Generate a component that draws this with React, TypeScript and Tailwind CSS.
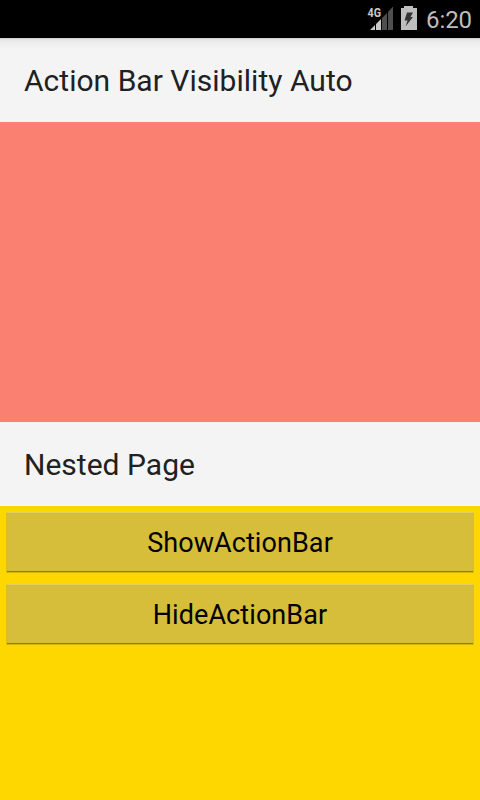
function SignalIcon() {
  return (
    <svg width="26" height="38" viewBox="368 0 26 38" className="shrink-0 overflow-visible">
      <path d="M370 30L375 25V30Z M376 24L381 19V30H376Z" fill="#cacaca" />
      <path d="M382 18L387 13V30H382Z M388 12L393 6.500V30H388Z" fill="#4f4f4f" />
      <text x="367.500" y="17" fontSize="13.500" fontWeight="700" textLength="13.500" lengthAdjust="spacingAndGlyphs" fill="#cacaca">4G</text>
    </svg>
  );
}

function BatteryIcon() {
  return (
    <svg width="16" height="38" viewBox="401 0 16 38" className="shrink-0">
      <path d="M404 6H413V8H417V30H401V8H404Z" fill="#bebebe" />
      <path d="M407 12.500H413L410.500 17H413L405.500 26.500L407.500 20.500H404.500Z" fill="#333" />
    </svg>
  );
}

function PageTitle({ children }: { children: string }) {
  return <h1 className="flex h-[84px] shrink-0 items-center px-6 text-[30px] text-[#212121]"><span className="tracking-[0.02px]">{children}</span></h1>;
}

function ActionButton({ children }: { children: string }) {
  return (
    <button className="flex h-[61px] items-center justify-center border border-x-[#ddbd20] border-t-[#e0cf67] border-b-[#d5b700] bg-[#d6be3a] shadow-[inset_0_-1px_0_#8d7c20]">
      <span className="pt-[2px] text-[27px] tracking-[0.08px]">{children}</span>
    </button>
  );
}

export default function App() {
  return (
    <div className="flex h-[800px] w-[480px] flex-col overflow-hidden bg-[#ffd700] font-[Roboto,sans-serif] text-black">
      <header className="flex h-[38px] shrink-0 items-center justify-end bg-black pr-2">
        <SignalIcon />
        <div className="mr-[9px] ml-[7px] flex"><BatteryIcon /></div>
        <span className="pt-[1px] text-[24px] leading-none tracking-[-0.1px] text-[#bebebe]">6:20</span>
      </header>
      <div className="bg-[#f4f4f4] bg-[linear-gradient(to_bottom,#b8b8b8_0px,#e5e5e5_1px,#ececec_4px,#f4f4f4_11px)]">
        <PageTitle>Action Bar Visibility Auto</PageTitle>
      </div>
      <div className="h-[300px] shrink-0 bg-[#fa8072]" />
      <div className="bg-[#f4f4f4]">
        <PageTitle>Nested Page</PageTitle>
      </div>
      <main className="flex flex-col gap-[11px] px-[6px] pt-[6px]">
        <ActionButton>ShowActionBar</ActionButton>
        <ActionButton>HideActionBar</ActionButton>
      </main>
    </div>
  );
}
